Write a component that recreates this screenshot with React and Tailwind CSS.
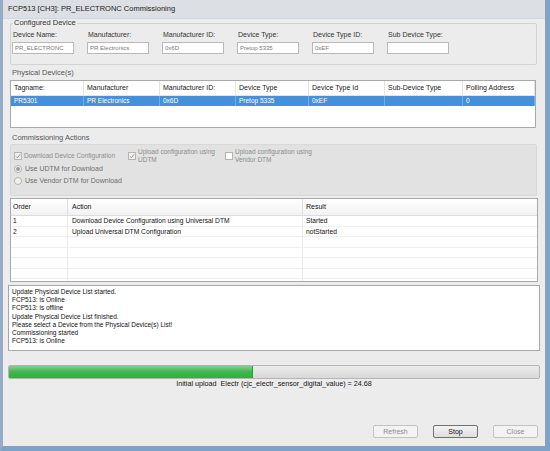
const configured = [
    { label: 'Device Name:', value: 'PR_ELECTRONC' },
    { label: 'Manufacturer:', value: 'PR Electronics' },
    { label: 'Manufacturer ID:', value: '0x6D' },
    { label: 'Device Type:', value: 'Pretop 5335' },
    { label: 'Device Type ID:', value: '0xEF' },
    { label: 'Sub Device Type:', value: '' },
];

const deviceHeaders = ['Tagname:', 'Manufacturer', 'Manufacturer ID:', 'Device Type', 'Device Type Id', 'Sub-Device Type', 'Polling Address'];
const deviceRow = ['PR5301', 'PR Electronics', '0x6D', 'Pretop 5335', '0xEF', '', '0'];

const actions = [
    { order: '1', action: 'Download Device Configuration using Universal DTM', result: 'Started' },
    { order: '2', action: 'Upload Universal DTM Configuration', result: 'notStarted' },
    { order: '', action: '', result: '' },
    { order: '', action: '', result: '' },
    { order: '', action: '', result: '' },
    { order: '', action: '', result: '' },
    { order: '', action: '', result: '' },
];

const logLines = [
    'Update Physical Device List started.',
    'FCP513: is Online',
    'FCP513: is offline',
    'Update Physical Device List finished.',
    'Please select a Device from the Physical Device(s) List!',
    'Commissioning started',
    'FCP513: is Online',
];

function CheckBox({ checked, white }) {
    return (
        <span className={`w-[8px] h-[8px] shrink-0 border border-[#b4b4b4] flex items-center justify-center ${white ? 'bg-white' : 'bg-[#efefef]'}`}>
            {checked && (
                <svg width="6" height="6" viewBox="0 0 6 6">
                    <path d="M0.8 3.2 L2.4 4.8 L5.2 1.2" fill="none" stroke="#9a9a9a" strokeWidth="1" />
                </svg>
            )}
        </span>
    );
}

function Radio({ selected }) {
    return (
        <span className="w-[8px] h-[8px] shrink-0 rounded-full border border-[#b4b4b4] bg-[#f1f1f1] flex items-center justify-center">
            {selected && <span className="w-[4px] h-[4px] rounded-full bg-[#9c9c9c]" />}
        </span>
    );
}

function Button({ children, enabled }) {
    return (
        <div
            className={`w-[45px] h-[13px] rounded-[2px] border flex items-center justify-center text-[7px] leading-none ${enabled
                    ? 'border-[#707070] bg-gradient-to-b from-[#f3f3f3] to-[#dedede] text-[#111]'
                    : 'border-[#c3c3c3] bg-[#f3f3f3] text-[#8a8a8a]'
                }`}
        >
            {children}
        </div>
    );
}

export default function App() {
    return (
        <div className="w-[550px] h-[451px] bg-[#ececec] border-l-[3px] border-l-[#97abc2] border-r-[5px] border-r-[#7ea2c8] border-b-[5px] border-b-[#7ea2c8] flex flex-col font-['Liberation_Sans',Arial,sans-serif] text-[#111]">
            {/* title bar */}
            <div className="h-[19px] shrink-0 bg-[#dcdfe3] border-b border-[#d3d6da] pl-[5px] flex items-center text-[7.5px] text-[#222]">
                FCP513 [CH3]: PR_ELECTRONC Commissioning
            </div>

            <div className="flex-1 flex flex-col px-[5px]">
                {/* Configured Device */}
                <fieldset className="ml-[2px] mr-[3px] h-[46px] border border-[#d3d3d3] rounded-[2px] px-[1px]">
                    <legend className="ml-[1px] px-[1px] text-[7.5px] leading-[8px] text-[#333]">Configured Device</legend>
                    <div className="flex gap-[13px]">
                        {configured.map((c) => (
                            <div key={c.label} className="w-[62px] flex flex-col">
                                <div className="mt-[3px] pl-[1px] text-[7px] leading-[9px] text-[#333]">{c.label}</div>
                                <div className="mt-[3px] h-[12px] border border-[#b8b8b8] bg-white pl-[2px] flex items-center text-[6px] text-[#777] overflow-hidden whitespace-nowrap">
                                    {c.value}
                                </div>
                            </div>
                        ))}
                    </div>
                </fieldset>

                {/* Physical Device(s) */}
                <div className="mt-[4px] ml-[4px] text-[7.5px] leading-[8px] text-[#555]">Physical Device(s)</div>
                <div className="mt-[3px] ml-[2px] mr-[4px] h-[48px] border border-[#a9a9a9] bg-white">
                    <div className="grid grid-cols-[73px_76px_76px_73px_76px_78px_1fr] h-[15px] border-b border-[#e3e3e3]">
                        {deviceHeaders.map((h) => (
                            <div key={h} className="border-r border-[#e3e3e3] pl-[3px] flex items-center text-[7px] text-[#222]">
                                {h}
                            </div>
                        ))}
                    </div>
                    <div className="grid grid-cols-[73px_76px_76px_73px_76px_78px_1fr] h-[10px] bg-[#4590dc]">
                        {deviceRow.map((v, i) => (
                            <div key={i} className="border-r border-[#74abe4] pl-[3px] flex items-center text-[6.5px] text-white">
                                {v}
                            </div>
                        ))}
                    </div>
                </div>

                {/* Commissioning Actions */}
                <div className="mt-[6px] ml-[4px] text-[7.5px] leading-[8px] text-[#555]">Commissioning Actions</div>
                <div className="mt-[2px] ml-[2px] mr-[3px] h-[52px] border border-[#d8d8d8] rounded-[2px] bg-[#e2e2e2] pl-[3px] pt-[3px]">
                    <div className="flex items-center h-[16px]">
                        <div className="w-[114px] flex items-center gap-[2px]">
                            <CheckBox checked />
                            <span className="text-[6.5px] leading-[8px] text-[#8c8c8c]">Download Device Configuration</span>
                        </div>
                        <div className="w-[97px] flex items-center gap-[2px]">
                            <CheckBox checked />
                            <span className="text-[6.5px] leading-[8px] text-[#8c8c8c]">
                                Upload configuration using
                                <br />
                                UDTM
                            </span>
                        </div>
                        <div className="flex items-center gap-[2px]">
                            <CheckBox white />
                            <span className="text-[6.5px] leading-[8px] text-[#8c8c8c]">
                                Upload configuration using
                                <br />
                                Vendor DTM
                            </span>
                        </div>
                    </div>
                    <div className="flex items-center h-[10px] gap-[3px]">
                        <Radio selected />
                        <span className="text-[7px] text-[#6e6e6e]">Use UDTM for Download</span>
                    </div>
                    <div className="mt-[2px] flex items-center h-[10px] gap-[3px]">
                        <Radio />
                        <span className="text-[7px] text-[#6e6e6e]">Use Vendor DTM for Download</span>
                    </div>
                </div>

                {/* actions table */}
                <div className="mt-[2px] ml-[2px] mr-[2px] h-[84px] border border-[#a9a9a9] bg-white overflow-hidden">
                    <div className="grid grid-cols-[57px_235px_1fr] h-[17px] border-b border-[#dcdcdc] bg-gradient-to-b from-white to-[#f2f2f2] text-[7px]">
                        <div className="border-r border-[#e0e0e0] pl-[2px] flex items-center">Order</div>
                        <div className="border-r border-[#e0e0e0] pl-[4px] flex items-center">Action</div>
                        <div className="pl-[3px] flex items-center">Result</div>
                    </div>
                    {actions.map((a, i) => (
                        <div key={i} className="grid grid-cols-[57px_235px_1fr] h-[10.5px] border-b border-[#efefef] text-[6.7px]">
                            <div className="border-r border-[#ebebeb] pl-[2px] flex items-center">{a.order}</div>
                            <div className="border-r border-[#ebebeb] pl-[4px] flex items-center">{a.action}</div>
                            <div className="pl-[3px] flex items-center">{a.result}</div>
                        </div>
                    ))}
                </div>

                {/* log */}
                <div className="mt-[3px] h-[66px] border border-[#a7a7a7] bg-white pl-[3px] pt-[2px] text-[6.5px] leading-[8.2px]">
                    {logLines.map((l, i) => (
                        <div key={i}>{l}</div>
                    ))}
                </div>

                {/* progress */}
                <div className="mt-[14px] h-[14px] border border-[#b4b4b4] rounded-[2px] bg-gradient-to-b from-[#ececec] to-[#d8d8d8] flex overflow-hidden">
                    <div className="w-[46%] h-full bg-gradient-to-b from-[#7fd489] via-[#3db64b] to-[#34ad42] border-r border-[#2e9c3b]" />
                </div>
                <div className="mt-[1px] text-center text-[7.2px] leading-[8px] text-[#111]">
                    Initial upload&nbsp;&nbsp;Electr (cjc_electr_sensor_digital_value) = 24.68
                </div>

                <div className="flex-1" />
                <div className="flex justify-end gap-[15px] mr-[2px] mb-[8px]">
                    <Button>Refresh</Button>
                    <Button enabled>Stop</Button>
                    <Button>Close</Button>
                </div>
            </div>
        </div>
    );
}
